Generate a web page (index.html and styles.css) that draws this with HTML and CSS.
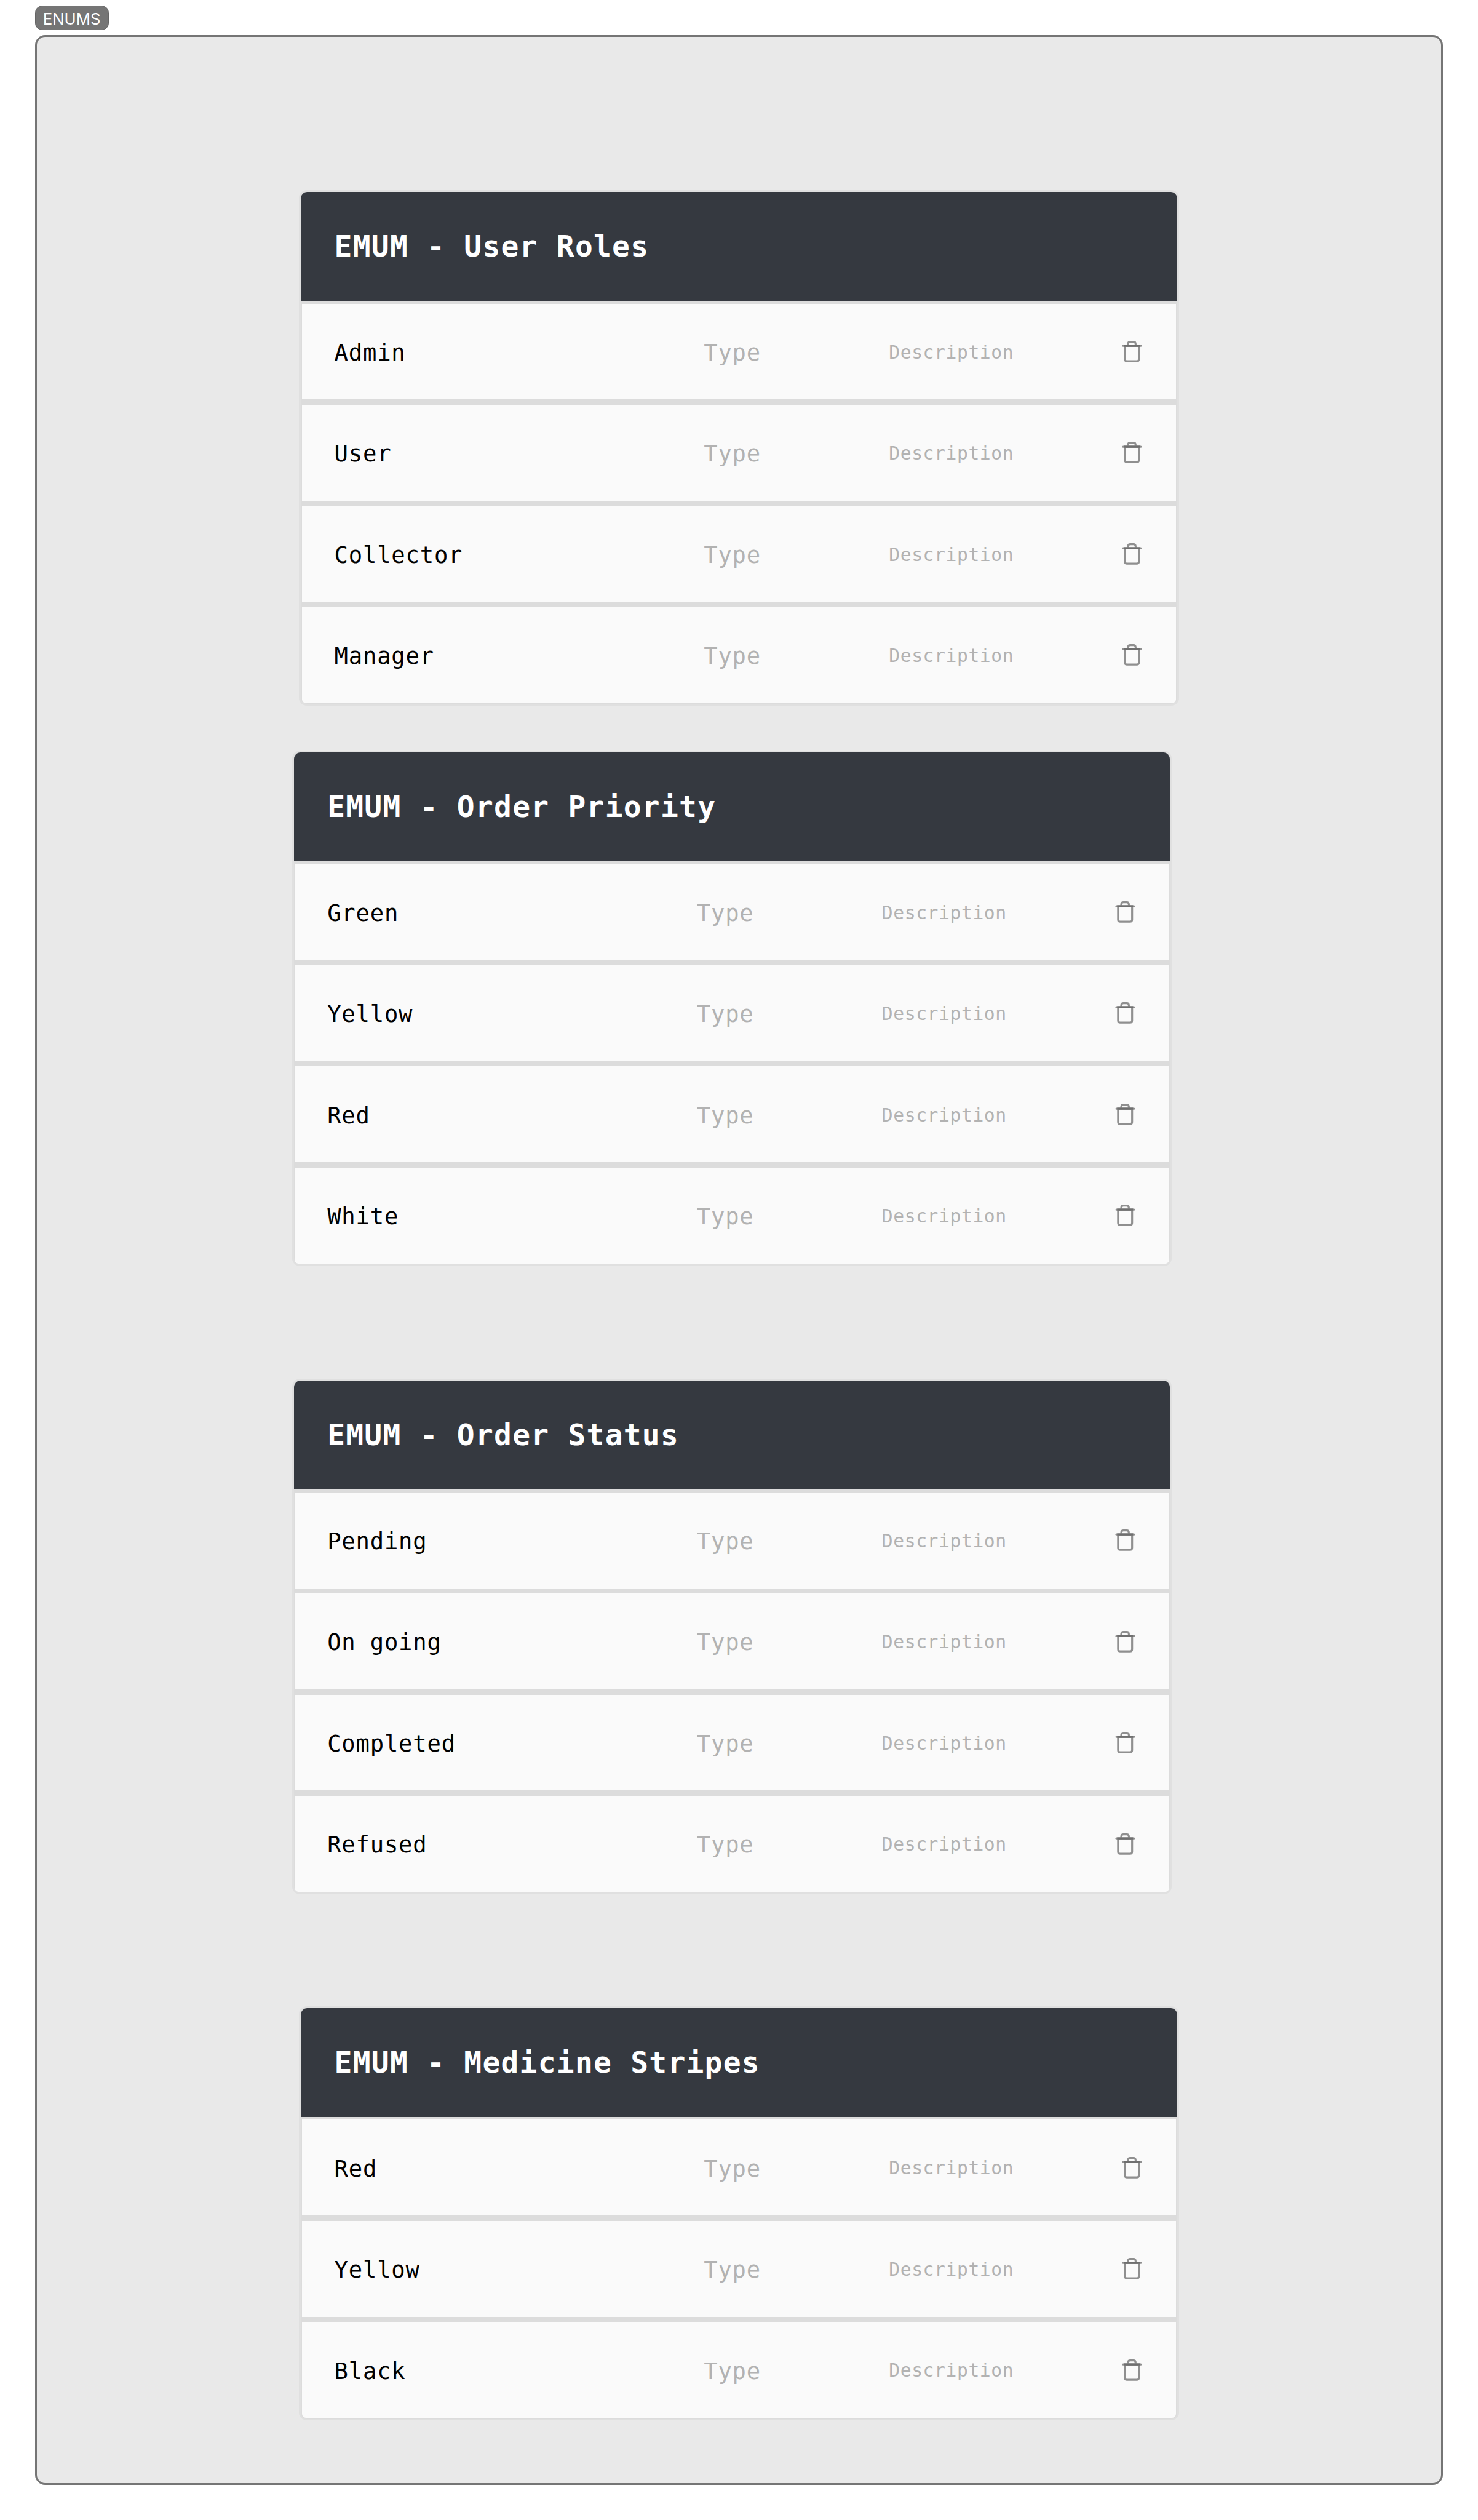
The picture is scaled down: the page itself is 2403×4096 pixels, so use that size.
FILE: index.html
```html
<!DOCTYPE html>
<html lang="en">
<head>
<meta charset="utf-8">
<title>ENUMS</title>
<link rel="stylesheet" href="styles.css">
</head>
<body>
<main class="page">
  <div class="tag">ENUMS</div>
  <div class="frame" id="frame"></div>
</main>
<script src="app.js"></script>
</body>
</html>
```
FILE: styles.css
```css
:root { --u: .7151px; }
* { box-sizing: border-box; }
body { margin: 0; background: #fff; }
.page {
  width: 2403px;
  height: 4096px;
  overflow: hidden;
  padding: calc(var(--u) * 12) calc(var(--u) * 80) 0;
}
.tag {
  width: calc(var(--u) * 167);
  height: calc(var(--u) * 56);
  margin-bottom: calc(var(--u) * 12);
  border: 1px solid #656565;
  border-radius: calc(var(--u) * 16);
  background: #757575;
  color: #fff;
  font: calc(var(--u) * 36)/calc(var(--u) * 59) Inter, "Liberation Sans", sans-serif;
  padding-left: calc(var(--u) * 16);
  white-space: nowrap;
}
.frame {
  height: calc(var(--u) * 5568);
  border: 3px solid #757575;
  border-radius: calc(var(--u) * 23);
  background: #e9e9e9;
  padding: calc(var(--u) * 348) 0 0 calc(var(--u) * 596);
  font-family: "DejaVu Sans Mono", "Liberation Mono", monospace;
}
.card {
  width: calc(var(--u) * 2000);
  padding: calc(var(--u) * 4);
  border-radius: calc(var(--u) * 18);
  background: #e0e0e0;
}
.card.shifted { margin-left: calc(var(--u) * -16); }
.card.near { margin-top: calc(var(--u) * 102); }
.card.far { margin-top: calc(var(--u) * 256); }
.card.last { margin-top: calc(var(--u) * 254); }
.title {
  height: calc(var(--u) * 248);
  margin: 0;
  border-radius: calc(var(--u) * 15) calc(var(--u) * 15) 0 0;
  background: #353940;
  color: #fff;
  font-size: calc(var(--u) * 67);
  letter-spacing: calc(var(--u) * 1.76);
  font-weight: 700;
  line-height: calc(var(--u) * 248);
  padding: 0 0 0 calc(var(--u) * 76);
  white-space: nowrap;
}
.rows {
  display: flex;
  flex-direction: column;
  gap: calc(var(--u) * 12);
  padding: calc(var(--u) * 6) calc(var(--u) * 2) calc(var(--u) * 2);
  background: #dcdcdc;
  border-radius: 0 0 calc(var(--u) * 14) calc(var(--u) * 14);
}
.row {
  display: grid;
  grid-template-columns: calc(var(--u) * 840) calc(var(--u) * 421) calc(var(--u) * 523) auto;
  align-items: center;
  height: calc(var(--u) * 218);
  padding-left: calc(var(--u) * 74);
  background: #fafafa;
  white-space: nowrap;
}
.row:last-child { border-radius: 0 0 calc(var(--u) * 9) calc(var(--u) * 9); }
.name, .type {
  font-size: calc(var(--u) * 52);
  letter-spacing: calc(var(--u) * 1.13);
  padding-top: calc(var(--u) * 4);
}
.name { color: #000; }
.type, .desc { color: #b2b2b2; }
.desc {
  font-size: calc(var(--u) * 41.5);
  letter-spacing: calc(var(--u) * .82);
  padding-top: calc(var(--u) * 2);
}
.trash {
  display: block;
  width: calc(var(--u) * 60);
  height: calc(var(--u) * 60);
  fill: none;
  stroke: #8f8f8f;
  stroke-width: 4.4;
  stroke-linecap: round;
}
.trash .lid {
  stroke: #6f6f6f;
  stroke-linecap: butt;
}
```
FILE: app.js
```js
const enums = [
  { title: 'User Roles', place: '', values: ['Admin', 'User', 'Collector', 'Manager'] },
  { title: 'Order Priority', place: 'shifted near', values: ['Green', 'Yellow', 'Red', 'White'] },
  { title: 'Order Status', place: 'shifted far', values: ['Pending', 'On going', 'Completed', 'Refused'] },
  { title: 'Medicine Stripes', place: 'last', values: ['Red', 'Yellow', 'Black'] }
];

const trash = `<svg class="trash" viewBox="0 0 60 60">
  <path d="M13.8 17H45.7V47.2Q45.7 52 40.9 52H18.6Q13.8 52 13.8 47.2Z"/>
  <path d="M10 17H50"/>
  <path d="M21 17V13Q21 7.8 26 7.8H33.3Q38.3 7.8 38.3 13V17"/>
  <path class="lid" d="M11.7 17H47.8"/>
</svg>`;

const row = name => `<div class="row">
  <span class="name">${name}</span>
  <span class="type">Type</span>
  <span class="desc">Description</span>
  ${trash}
</div>`;

document.getElementById('frame').innerHTML = enums.map(e => `
  <section class="card ${e.place}">
    <h2 class="title">EMUM - ${e.title}</h2>
    <div class="rows">${e.values.map(row).join('')}</div>
  </section>`).join('');
```
